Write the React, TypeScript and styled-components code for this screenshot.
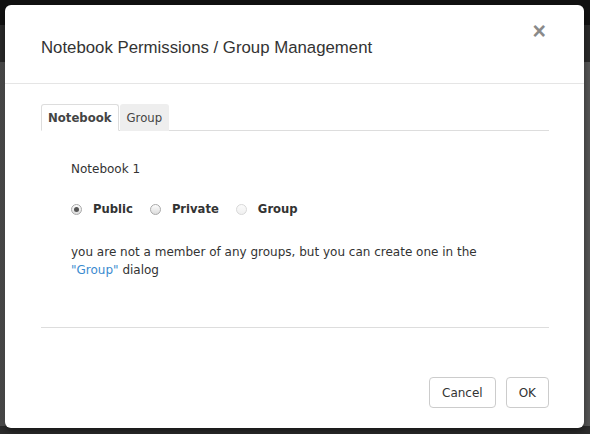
import React from "react";
import styled, { createGlobalStyle } from "styled-components";

const Global = createGlobalStyle`
  html, body { margin: 0; padding: 0; }
  body {
    width: 590px;
    height: 434px;
    overflow: hidden;
    background: #575757;
    font-family: "DejaVu Sans", Verdana, sans-serif;
  }
`;

const Page = styled.div`
  position: relative;
  width: 590px;
  height: 434px;
  display: flex;
  flex-direction: column;
`;

const TopBar = styled.div`
  height: 25px;
  background: #121212;
`;

const SubBar = styled.div`
  height: 37px;
  background: #2b2b2b;
`;

const PageBody = styled.div`
  flex: 1;
  background: linear-gradient(to right, #4a4a4a 0px, #5c5c5c 6px, #585858 100%);
`;

const BottomBar = styled.div`
  height: 8px;
  background: #2c2c2c;
`;

const Modal = styled.div`
  position: absolute;
  left: 5px;
  top: 5px;
  width: 579px;
  height: 423px;
  background: #fff;
  border-radius: 6px;
  box-shadow: 0 3px 9px rgba(0, 0, 0, 0.5);
  display: flex;
  flex-direction: column;
  color: #333;
`;

const Header = styled.div`
  display: flex;
  justify-content: space-between;
  align-items: flex-start;
  padding: 33px 38px 25px 36px;
  border-bottom: 1px solid #e5e5e5;
`;

const Title = styled.h4`
  margin: 0;
  font-family: "Liberation Sans", Arial, sans-serif;
  font-weight: 400;
  font-size: 16.8px;
  line-height: 20px;
  color: #333;
`;

const Close = styled.button`
  border: 0;
  background: transparent;
  padding: 0;
  margin-top: -18px;
  font-family: "Liberation Sans", Arial, sans-serif;
  font-weight: 700;
  font-size: 23px;
  line-height: 23px;
  color: #8a8a8a;
  cursor: pointer;
`;

const Body = styled.div`
  padding: 20px 35px 0 36px;
  flex: 1;
`;

const TabBar = styled.div`
  display: flex;
  border-bottom: 1px solid #ddd;
  gap: 1px;
`;

const Tab = styled.div<{ $active?: boolean }>`
  padding: 0 6px;
  height: 25px;
  line-height: 26px;
  font-size: 11.7px;
  border: 1px solid ${(p) => (p.$active ? "#ddd" : "#eee")};
  border-bottom-color: ${(p) => (p.$active ? "#fff" : "transparent")};
  border-radius: 3px 3px 0 0;
  background: ${(p) => (p.$active ? "#fff" : "#eee")};
  font-weight: ${(p) => (p.$active ? 700 : 400)};
  color: #444;
  margin-bottom: -1px;
`;

const TabPane = styled.div`
  padding: 30px 0 0 30px;
  font-size: 12px;
`;

const Line = styled.div`
  line-height: 17px;
`;

const RadioRow = styled.div`
  display: flex;
  align-items: center;
  gap: 17px;
  margin-top: 21px;
  height: 20px;
`;

const RadioLabel = styled.label`
  display: flex;
  align-items: center;
  gap: 11px;
  font-weight: 700;
  font-size: 11.6px;
  color: #333;
`;

const Radio = styled.span<{ $checked?: boolean; $disabled?: boolean }>`
  width: 11px;
  height: 11px;
  border-radius: 50%;
  box-sizing: border-box;
  border: 1px solid ${(p) => (p.$disabled ? "#d8d8d8" : "#a9a9a9")};
  background: ${(p) =>
    p.$disabled
      ? "linear-gradient(#fbfbfb, #f0f0f0)"
      : "linear-gradient(#fdfdfd, #dcdcdc)"};
  display: flex;
  align-items: center;
  justify-content: center;
  &::after {
    content: "";
    display: ${(p) => (p.$checked ? "block" : "none")};
    width: 5px;
    height: 5px;
    border-radius: 50%;
    background: #555;
  }
`;

const Para = styled.p`
  margin: 24px 0 0;
  line-height: 18px;
  font-size: 12px;
  width: 420px;
`;

const Link = styled.a`
  color: #3b8bd0;
  text-decoration: none;
`;

const Rule = styled.hr`
  margin: 48px 0 0;
  border: 0;
  border-top: 1px solid #ddd;
`;

const Footer = styled.div`
  display: flex;
  justify-content: flex-end;
  gap: 10px;
  padding: 0 35px 20px 0;
`;

const Button = styled.button`
  height: 31px;
  padding: 0 12px;
  background: #fff;
  border: 1px solid #ccc;
  border-radius: 4px;
  font-family: "DejaVu Sans", Verdana, sans-serif;
  font-size: 12px;
  color: #333;
`;

export default function App() {
  return (
    <>
      <Global />
      <Page>
        <TopBar />
        <SubBar />
        <PageBody />
        <BottomBar />
        <Modal>
          <Header>
            <Title>Notebook Permissions / Group Management</Title>
            <Close aria-label="Close">×</Close>
          </Header>
          <Body>
            <TabBar>
              <Tab $active>Notebook</Tab>
              <Tab>Group</Tab>
            </TabBar>
            <TabPane>
              <Line>Notebook 1</Line>
              <RadioRow>
                <RadioLabel>
                  <Radio $checked />
                  Public
                </RadioLabel>
                <RadioLabel>
                  <Radio />
                  Private
                </RadioLabel>
                <RadioLabel>
                  <Radio $disabled />
                  Group
                </RadioLabel>
              </RadioRow>
              <Para>
                you are not a member of any groups, but you can create one in the{" "}
                <Link href="#">"Group"</Link> dialog
              </Para>
            </TabPane>
            <Rule />
          </Body>
          <Footer>
            <Button>Cancel</Button>
            <Button>OK</Button>
          </Footer>
        </Modal>
      </Page>
    </>
  );
}
